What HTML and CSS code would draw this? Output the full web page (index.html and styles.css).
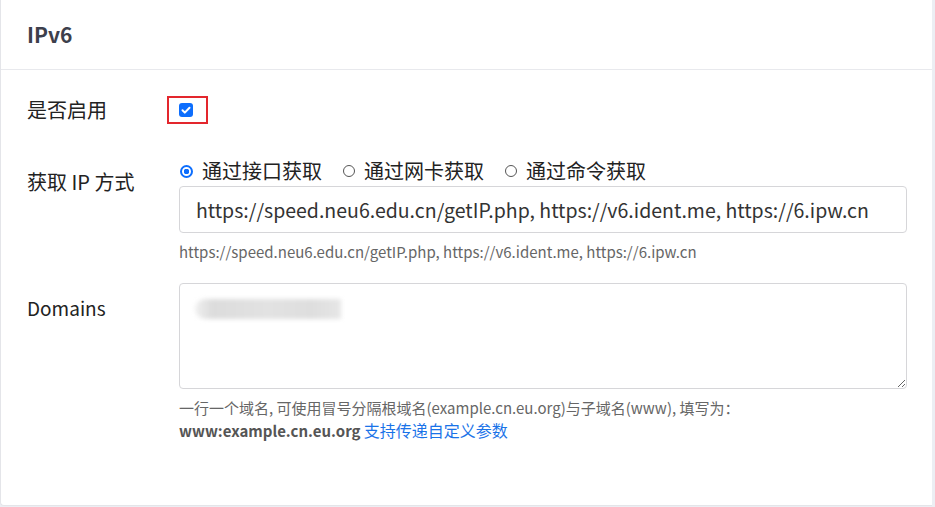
FILE: index.html
```html
<!DOCTYPE html>
<html lang="zh-CN">
<head>
<meta charset="utf-8">
<title>IPv6</title>
<link rel="stylesheet" href="styles.css">
</head>
<body>
<div class="card">
  <div class="card-header">IPv6</div>
  <div class="card-body">
    <div class="row row-enable">
      <div class="label">是否启用</div>
      <div class="field">
        <span class="highlight"><input type="checkbox" class="check" checked></span>
      </div>
    </div>
    <div class="row row-ip">
      <div class="label label-ip">获取 IP 方式</div>
      <div class="field">
        <div class="radios">
          <label class="radio"><input type="radio" name="m" checked><span>通过接口获取</span></label>
          <label class="radio"><input type="radio" name="m"><span>通过网卡获取</span></label>
          <label class="radio"><input type="radio" name="m"><span>通过命令获取</span></label>
        </div>
        <input class="text-input" type="text" value="https://speed.neu6.edu.cn/getIP.php, https://v6.ident.me, https://6.ipw.cn">
        <div class="help">https://speed.neu6.edu.cn/getIP.php, https://v6.ident.me, https://6.ipw.cn</div>
      </div>
    </div>
    <div class="row row-domains">
      <div class="label label-domains">Domains</div>
      <div class="field">
        <div class="textarea-wrap">
          <textarea class="textarea"></textarea>
          <div class="blurred"></div>
        </div>
        <div class="help help-domains">一行一个域名, 可使用冒号分隔根域名(example.cn.eu.org)与子域名(www), 填写为：<br><b>www:example.cn.eu.org</b> <a href="#" class="link">支持传递自定义参数</a></div>
      </div>
    </div>
  </div>
</div>
</body>
</html>
```
FILE: styles.css
```css
html, body {
  margin: 0;
  padding: 0;
  background: #eceef3;
  font-family: "Noto Sans CJK SC", "Noto Sans", sans-serif;
  color: #222;
}
.card {
  width: 931px;
  height: 505px;
  background: #fff;
  border-left: 1px solid #e4e5e9;
  border-bottom: 1px solid #e4e5e9;
  border-radius: 0 0 0 4px;
}
.card-header {
  height: 70px;
  box-sizing: border-box;
  border-bottom: 1px solid #e8e9ed;
  padding-left: 26px;
  display: flex;
  align-items: center;
  font-size: 21px;
  font-weight: 700;
  color: #3d3f4c;
  padding-bottom: 1px;
}
.card-body {
  padding: 26px 25px 0 26px;
}
.row {
  display: grid;
  grid-template-columns: 152px 1fr;
}
.label {
  font-size: 20px;
  line-height: 24px;
}
.row-enable {
  align-items: center;
}
.row-ip {
  margin-top: 35px;
}
.label-ip {
  padding-top: 11px;
}
.row-domains {
  margin-top: 20px;
}
.label-domains {
  padding-top: 13px;
  font-size: 19px;
}
.highlight {
  display: inline-flex;
  border: 2px solid #e3262d;
  padding: 5px 13px 5px 10px;
  margin-left: -12px;
}
.check {
  appearance: none;
  margin: 0;
  width: 14px;
  height: 14px;
  border-radius: 3px;
  background: #0d6efd url("data:image/svg+xml,%3Csvg xmlns='http://www.w3.org/2000/svg' viewBox='0 0 14 14'%3E%3Cpath d='M3.5 7.3l2.3 2.3 4.7-4.9' fill='none' stroke='%23fff' stroke-width='2' stroke-linecap='round' stroke-linejoin='round'/%3E%3C/svg%3E") center/14px 14px no-repeat;
}
.radios {
  display: flex;
  gap: 20px;
  height: 24px;
  align-items: center;
}
.radio {
  display: inline-flex;
  align-items: center;
  gap: 9px;
  font-size: 20px;
  line-height: 24px;
}
.radio input {
  appearance: none;
  margin: 0 0 0 1px;
  width: 12px;
  height: 12px;
  border: 1px solid #555;
  border-radius: 50%;
  box-sizing: border-box;
}
.radio input:checked {
  border: 2px solid #0d6efd;
  background: radial-gradient(circle, #0d6efd 0 2.6px, #fff 3px);
  width: 13px;
  height: 13px;
}
.text-input {
  display: block;
  margin-top: 3px;
  width: 100%;
  height: 47px;
  box-sizing: border-box;
  border: 1px solid #d6d6d9;
  border-radius: 4px;
  padding: 0 16px;
  font-family: inherit;
  font-size: 19.5px;
  color: #333;
  outline: none;
}
.help {
  font-size: 15px;
  line-height: 23px;
  color: #666;
  margin-top: 7px;
}
.textarea-wrap {
  position: relative;
  height: 106px;
}
.textarea {
  display: block;
  width: 100%;
  height: 106px;
  box-sizing: border-box;
  border: 1px solid #d6d6d9;
  border-radius: 4px;
  resize: vertical;
  font-family: inherit;
  outline: none;
}
.blurred {
  position: absolute;
  left: 16px;
  top: 16px;
  width: 146px;
  height: 20px;
  background: linear-gradient(90deg, #f0f0f0 0, #dcdcdc 12%, #e2e2e2 50%, #dedede 80%, #e6e6e6 100%);
  filter: blur(2px);
  border-radius: 10px 0 0 10px;
}
.help-domains {
  margin-top: 7px;
}
.help-domains b {
  color: #555;
}
.link {
  color: #1a73e8;
  text-decoration: none;
  font-size: 16px;
}
```
